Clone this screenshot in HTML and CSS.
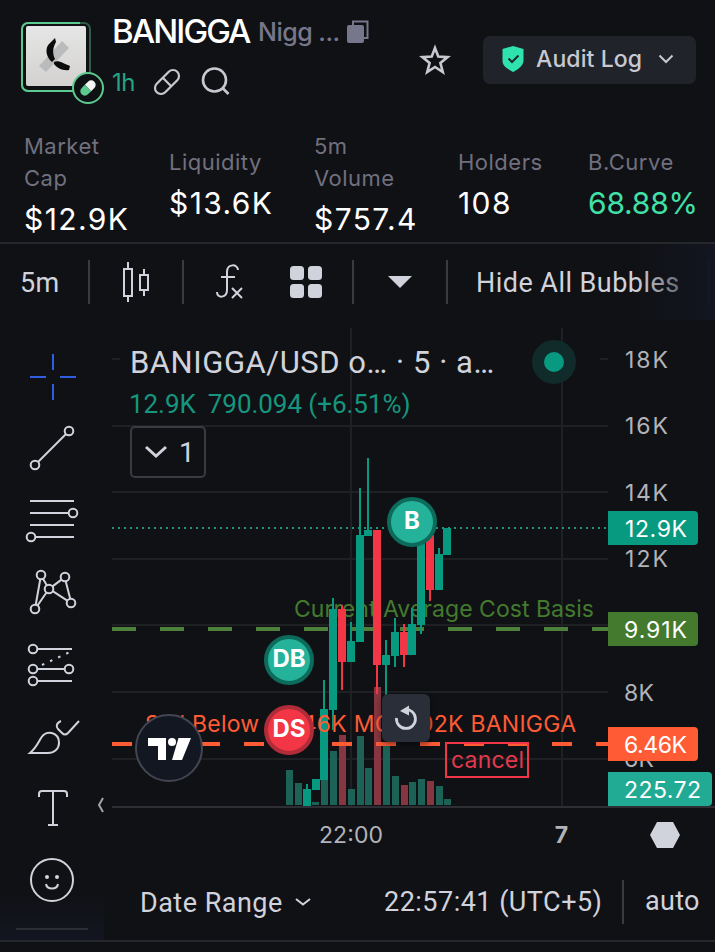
FILE: index.html
```html
<!DOCTYPE html>
<html lang="en">
<head>
  <meta charset="UTF-8" />
  <meta name="viewport" content="width=device-width, initial-scale=1.0" />
  <title>BANIGGA/USD</title>
  <link rel="stylesheet" href="styles.css">
</head>
<body>

  <header class="token">
    <div class="avatar">
      <svg width="72" height="72" viewBox="0 0 72 72">
        <defs>
          <linearGradient id="photo" x1="0" y1="0" x2="0" y2="1">
            <stop offset="0" stop-color="#e6e6e6"/><stop offset="1" stop-color="#d2d1cf"/>
          </linearGradient>
        </defs>
        <rect x="2" y="2" width="68" height="68" rx="6" fill="none" stroke="#2f5c49" stroke-width="2"/>
        <path d="M60 2H8a6 6 0 0 0-6 6v56a6 6 0 0 0 6 6h48" fill="none" stroke="#5cc98f" stroke-width="2"/>
        <rect x="6" y="5" width="60" height="60" rx="2" fill="url(#photo)"/>
        <path d="M42 20l7 7-23 24-7-6z" fill="#b9bbbd"/>
        <path d="M35 17l1 4c-3 5-4 11-1 17l-3 3c-7-6-7-15-2-19z" fill="#0b0b0c"/>
        <path d="M34 41c5-2 8 1 16 4l-1 4c-6 1-12-2-15-6z" fill="#0b0b0c"/>
      </svg>
      <svg class="pump" width="32" height="32" viewBox="0 0 32 32">
        <circle cx="16" cy="16" r="15" fill="#0e1013" stroke="#5cc98f" stroke-width="2"/>
        <g transform="rotate(45 16 16)">
          <path d="M11.500 16V11.500a4.500 4.500 0 0 1 9 0V16z" fill="#f4f6f5"/>
          <path d="M11.500 16v4.500a4.500 4.500 0 0 0 9 0V16z" fill="#5cc98f"/>
        </g>
      </svg>
    </div>
    <div class="token-info">
      <div class="token-name">
        <h1>BANIGGA</h1>
        <span class="subname">Nigg ...</span>
        <svg width="22" height="24" viewBox="0 0 22 24">
          <path d="M6 5V1.500h14.500V18H17" fill="none" stroke="#77778b" stroke-width="2"/>
          <rect x="0" y="5" width="17" height="18" rx="2" fill="#77778b"/>
        </svg>
      </div>
      <div class="token-links">
        <span class="age">1h</span>
        <svg width="28" height="28" viewBox="0 0 28 28" fill="none" stroke="#c8c9d0" stroke-width="2.200">
          <g transform="rotate(45 14 14)"><rect x="8" y="-0.500" width="12" height="29" rx="6"/><path d="M8 14h12"/></g>
        </svg>
        <svg class="search" width="30" height="30" viewBox="0 0 30 30" fill="none" stroke="#c8c9d0" stroke-width="2.600">
          <circle cx="13.500" cy="13" r="11.500"/><path d="M21.500 21l6 6"/>
        </svg>
      </div>
    </div>
    <svg class="star" width="32" height="32" viewBox="0 0 32 32">
      <path d="M16 4l3.300 8.600 9.300.500-7.200 5.900 2.400 9L16 23l-7.800 5 2.400-9-7.200-5.900 9.300-.500z" fill="none" stroke="#c8c9d0" stroke-width="2.600"/>
    </svg>
    <button class="audit">
      <svg width="22" height="26" viewBox="0 0 22 26">
        <path d="M11 0l10.500 3v12c0 5-8 10-10.500 11C5.500 23 .500 20 .500 15V3z" fill="#2fe3ac"/>
        <path d="M6.500 12.500l3.500 3.500 6.500-6.500" fill="none" stroke="#1d2a2d" stroke-width="2"/>
      </svg>
      <span>Audit Log</span>
      <svg width="16" height="10" viewBox="0 0 16 10"><path d="M1.500 1.500L8 8l6.500-6.500" fill="none" stroke="#c8c9d0" stroke-width="2"/></svg>
    </button>
  </header>

  <section class="stats">
    <div class="stat"><span>Market<br>Cap</span><b>$12.9K</b></div>
    <div class="stat"><span>Liquidity</span><b>$13.6K</b></div>
    <div class="stat"><span>5m<br>Volume</span><b>$757.4</b></div>
    <div class="stat"><span>Holders</span><b>108</b></div>
    <div class="stat"><span>B.Curve</span><b class="curve">68.88%</b></div>
  </section>

  <nav class="toolbar">
    <span class="tf">5m</span>
    <div class="tool candles">
      <svg width="30" height="42" viewBox="0 0 30 42" fill="none" stroke="#d1d3dc" stroke-width="2">
        <path d="M3 8h8v27H3zM7 1v7M7 35v6M19 14h8v15h-8zM23 8v6M23 29v6"/>
      </svg>
    </div>
    <div class="tool group">
      <svg width="30" height="38" viewBox="0 0 30 38" fill="none" stroke="#d1d3dc" stroke-width="2">
        <path d="M23 7C23 1 12 0 12 9v18c0 8-10 9-10 2M6 14h14M17 25l10 10M27 25L17 35"/>
      </svg>
      <svg width="32" height="32" viewBox="0 0 32 32" fill="#d1d3dc">
        <rect width="14" height="14" rx="3.500"/><rect x="18" width="14" height="14" rx="3.500"/>
        <rect y="18" width="14" height="14" rx="3.500"/><rect x="18" y="18" width="14" height="14" rx="3.500"/>
      </svg>
    </div>
    <div class="tool more">
      <svg width="24" height="12" viewBox="0 0 24 12"><path d="M0 0h24L12 12z" fill="#d1d3dc"/></svg>
    </div>
    <div class="tool bubbles"><span>Hide All Bubbles</span></div>
  </nav>

  <main class="workspace">
    <aside class="drawing">
      <svg viewBox="0 0 104 72" class="active"><path d="M53 13v16M53 43v16M30 36h16M60 36h16"/></svg>
      <svg viewBox="0 0 104 72"><circle cx="69" cy="18" r="4.300"/><circle cx="35" cy="52" r="4.300"/><path d="M38 49l28-28"/></svg>
      <svg viewBox="0 0 104 72"><circle cx="73" cy="28" r="4.300"/><circle cx="31" cy="52" r="4.300"/><path d="M30 16h44M30 28h39M30 40h44M35 52h39"/></svg>
      <svg viewBox="0 0 104 72">
        <circle cx="41" cy="18" r="4.300"/><circle cx="65" cy="20" r="4.300"/><circle cx="49" cy="32" r="4.300"/><circle cx="71" cy="46" r="4.300"/><circle cx="35" cy="52" r="4.300"/>
        <path d="M35.700 48l4.600-26M43 21.700l3.800 6.600M37.500 48.500l9-13M52.500 29.400l9-6.800M65.700 24.300l4.500 17.500M52.700 34.200l14.600 9.500"/>
      </svg>
      <svg viewBox="0 0 104 72">
        <circle cx="33" cy="20" r="4.300"/><circle cx="33" cy="40" r="4.300"/><circle cx="69" cy="40" r="4.300"/><circle cx="33" cy="52" r="4.300"/>
        <path d="M37 20h35M37 40h28M37 52h35"/><path d="M42 36l28-13" stroke-dasharray="2.500 6.400"/>
      </svg>
      <svg viewBox="0 0 104 72"><path d="M30 52c6-5 8-10 11-15 5-9 18-6 18 5 0 6-5 10-11 10zM61 20c-5 2-5 6-3 8l4 4q3 3 6 0l11-12"/></svg>
      <svg viewBox="0 0 104 72"><path d="M39 24v-3q0-3 3-3h22q3 0 3 3v3M53 18v34M48 52h10"/></svg>
      <svg viewBox="0 0 104 72"><circle cx="52" cy="35" r="21"/><path d="M46 39c1 6 11 6 12 0"/><g fill="#d1d3dc" stroke="none"><circle cx="47" cy="32" r="2"/><circle cx="57" cy="32" r="2"/></g></svg>
      <svg class="collapse" viewBox="0 0 8 16"><path d="M6 1L2 8l4 7"/></svg>
      <hr>
    </aside>

    <section class="chart">
      <div class="plot">
        <svg id="plot" width="611" height="546" viewBox="104 320 611 546">
          <g class="grid">
            <path d="M112 359h8M600 359h8M112 426h496M112 492h496M112 559h496M112 625h496M112 692h496M112 759h496"/>
            <path d="M351 328v478M562 328v478"/>
          </g>
          <path class="axis" d="M112 807h603"/>
          <text class="cost" x="294" y="617" textLength="300">Current Average Cost Basis</text>
          <path class="cost-line" d="M112 629h496"/>
          <g id="volume"></g>
          <g id="candles"></g>
          <path class="price-line" d="M112 528h496"/>
          <path class="sell-line" d="M112 744h496"/>
          <text class="sell" x="145" y="732" textLength="431">Sell Below $6.46K MC 2.02K BANIGGA</text>
          <g class="prices">
            <text x="625" y="368" textLength="43">18K</text>
            <text x="625" y="434" textLength="43">16K</text>
            <text x="625" y="501" textLength="43">14K</text>
            <text x="625" y="567" textLength="43">12K</text>
            <text x="624" y="701" textLength="30">8K</text>
            <text x="624" y="767" textLength="30">6K</text>
          </g>
          <g class="tags">
            <path d="M608 511h86q4 0 4 4v26q0 4-4 4h-86z" fill="#089981"/>
            <path d="M608 612h86q4 0 4 4v26q0 4-4 4h-86z" fill="#437a2d"/>
            <path d="M608 727h86q4 0 4 4v26q0 4-4 4h-86z" fill="#ff5b35"/>
            <path d="M608 772h100q4 0 4 4v26q0 4-4 4H608z" fill="#22ab94"/>
            <text x="625" y="537" textLength="62">12.9K</text>
            <text x="624" y="638" textLength="63">9.91K</text>
            <text x="624" y="753" textLength="63">6.46K</text>
            <text x="624" y="798" textLength="77">225.72</text>
          </g>
          <g class="times">
            <text x="351" y="843" textLength="64">22:00</text>
            <text x="561.500" y="843" class="day">7</text>
          </g>
          <path d="M657 822h16l7 13-7 13h-16l-7-13z" fill="#d1d3dc"/>
          <g class="cancel">
            <rect x="446" y="743" width="82" height="34"/>
            <text x="451" y="768" textLength="73">cancel</text>
          </g>
          <g class="bubble">
            <circle cx="412" cy="522" r="23"/><text x="412" y="529">B</text>
            <circle cx="289" cy="660" r="23"/><text x="289" y="667">DB</text>
            <circle cx="289" cy="730" r="23" class="short"/><text x="289" y="737">DS</text>
          </g>
          <g>
            <circle cx="169" cy="748" r="33" fill="#131722" stroke="#434651" stroke-width="2"/>
            <path d="M148 738h18v22h-8v-14h-10zM178.500 738H191l-9 22h-10z" fill="#fff"/>
            <circle cx="172" cy="742" r="4" fill="#fff"/>
          </g>
          <g>
            <rect class="reset" x="382" y="694" width="48" height="48" rx="6"/>
            <path d="M405 709.500A9.500 9.500 0 1 1 396.500 718" fill="none" stroke="#d1d3dc" stroke-width="2.800"/>
            <path d="M400 711l9-5.500v10z" fill="#d1d3dc"/>
          </g>
        </svg>
        <div class="legend">
          <div class="symbol">BANIGGA/USD o… · 5 · a…</div>
          <div class="change"><span>12.9K</span><span>790.094 (+6.51%)</span></div>
          <div class="studies">
            <svg width="24" height="14" viewBox="0 0 24 14"><path d="M2 2l10 9L22 2" fill="none" stroke="#d1d3dc" stroke-width="3"/></svg>
            <span>1</span>
          </div>
        </div>
        <div class="status"></div>
      </div>
      <footer class="range">
        <span class="date">Date Range</span>
        <svg width="18" height="10" viewBox="0 0 18 10"><path d="M2 2l7 5.500L16 2" fill="none" stroke="#d1d3dc" stroke-width="2"/></svg>
        <span class="clock">22:57:41 (UTC+5)</span>
        <span class="auto">auto</span>
      </footer>
    </section>
  </main>

  <script src="chart.js"></script>
</body>
</html>
```
FILE: styles.css
```css
* {
  box-sizing: border-box;
}
body {
  margin: 0;
  width: 715px;
  height: 952px;
  overflow: hidden;
  background: #101115;
  color: #d1d3dc;
  font-family: Roboto, sans-serif;
}
svg {
  display: block;
  flex: none;
}

/* token header */
.token {
  display: flex;
  height: 128px;
  padding-left: 20px;
  font-family: Inter, sans-serif;
}
.avatar {
  position: relative;
  width: 92px;
  padding-top: 21px;
}
.pump {
  position: absolute;
  left: 52px;
  top: 72px;
}
.token-info {
  width: 308px;
  padding-top: 10px;
}
.token-name {
  display: flex;
  align-items: center;
  height: 44px;
}
h1 {
  margin: 0;
  width: 146px;
  padding-bottom: 2px;
  font-size: 33px;
  font-weight: 500;
  letter-spacing: -1.9px;
  color: #fff;
}
.subname {
  width: 89px;
  font-size: 25px;
  font-weight: 500;
  letter-spacing: -0.5px;
  color: #77778b;
  white-space: nowrap;
}
.token-links {
  display: flex;
  align-items: center;
  height: 56px;
}
.age {
  width: 41px;
  font-size: 24px;
  letter-spacing: -0.5px;
  color: #23a583;
}
.search {
  margin-left: 20px;
}
.star {
  margin-top: 44px;
  margin-left: -1px;
  margin-right: 32px;
}
.audit {
  display: flex;
  align-items: center;
  width: 213px;
  height: 48px;
  margin-top: 36px;
  padding: 0 0 2px 19px;
  border: 0;
  border-radius: 7px;
  background: #20232a;
  color: #c8c9d0;
  font: 500 23px Inter, sans-serif;
  letter-spacing: 0.1px;
}
.audit span {
  width: 122px;
  margin-left: 12px;
  text-align: left;
  white-space: nowrap;
}

/* stats */
.stats {
  display: grid;
  grid-template-columns: 145px 145px 144px 130px auto;
  align-items: center;
  height: 116px;
  padding: 0 0 4px 24px;
  border-bottom: 2px solid #26272c;
  font-family: Inter, sans-serif;
}
.stat span {
  display: block;
  font-size: 22px;
  line-height: 32px;
  letter-spacing: 0.5px;
  color: #70707f;
}
.stat b {
  display: block;
  margin-bottom: -4px;
  padding-top: 4px;
  font-size: 30px;
  font-weight: 400;
  line-height: 43px;
  letter-spacing: 1.4px;
  color: #fff;
}
.stat .curve {
  letter-spacing: -0.2px;
  color: #41e0a8;
}

/* chart toolbar */
.toolbar {
  position: relative;
  display: flex;
  align-items: center;
  height: 76px;
  padding-left: 20px;
  font-size: 27px;
}
.toolbar::after {
  content: "";
  position: absolute;
  top: 0;
  right: 0;
  width: 80px;
  height: 76px;
  background: linear-gradient(90deg, rgba(19, 22, 33, 0), #131621);
}
.tf {
  width: 68px;
  padding-top: 2px;
  letter-spacing: 0.3px;
}
.tool {
  display: flex;
  align-items: center;
  height: 44px;
  border-left: 2px solid #3a3b41;
}
.candles {
  width: 94px;
  padding-left: 31px;
}
.group {
  width: 170px;
  padding-left: 31px;
  gap: 45px;
}
.more {
  width: 94px;
  padding-left: 34px;
}
.bubbles {
  width: 264px;
  padding-left: 28px;
  border-right: 2px solid #3a3b41;
  letter-spacing: 0.45px;
  white-space: nowrap;
}
.bubbles span {
  padding-top: 2px;
}

.workspace {
  display: flex;
  height: 622px;
  border-bottom: 2px solid #26272c;
}

/* drawing tools */
.drawing {
  position: relative;
  width: 104px;
  padding-top: 21px;
  background: linear-gradient(180deg, #101115 93%, #131621 100%);
}
.drawing svg {
  width: 104px;
  height: 72px;
  fill: none;
  stroke: #d1d3dc;
  stroke-width: 2;
}
.drawing .active {
  stroke: #2f5fe0;
}
.drawing .collapse {
  position: absolute;
  left: 97px;
  top: 477px;
  width: 8px;
  height: 16px;
  stroke: #a3a4aa;
}
.drawing hr {
  width: 72px;
  height: 2px;
  margin: 11px 0 0 16px;
  border: 0;
  background: #2c2e36;
}

/* plot */
.plot {
  position: relative;
  width: 611px;
  height: 546px;
}
.plot text {
  font-family: Inter, sans-serif;
  font-size: 23px;
}
.grid path,
.axis {
  fill: none;
  stroke: #1f2024;
  stroke-width: 2;
}
.plot .axis {
  stroke: #2e2f34;
}
.cost {
  fill: #437a2d;
}
.cost-line {
  stroke: #4c803b;
  stroke-width: 4;
  stroke-dasharray: 24 24;
}
.price-line {
  stroke: #23937f;
  stroke-width: 2;
  stroke-dasharray: 2 4;
}
.sell {
  fill: #ff5b35;
}
.sell-line {
  stroke: #ff5b35;
  stroke-width: 4;
  stroke-dasharray: 20 24;
}
.up {
  fill: #089981;
}
.down {
  fill: #f23645;
}
#volume .up {
  fill: #1c6256;
}
#volume .down {
  fill: #853640;
}
.prices {
  fill: #b2b3b9;
}
.tags text {
  fill: #fff;
}
.times {
  fill: #b2b3b9;
  text-anchor: middle;
}
.plot .day {
  font-weight: 700;
}
.cancel rect {
  fill: none;
  stroke: #f23645;
  stroke-width: 2;
}
.cancel text {
  fill: #e2394d;
}
.bubble circle {
  fill: #24b39a;
  stroke: #0c6b5b;
  stroke-width: 4;
}
.bubble .short {
  fill: #f23645;
  stroke: #b02c38;
}
.bubble text {
  fill: #fff;
  font-size: 24px;
  font-weight: 700;
  text-anchor: middle;
}
.reset {
  fill: #2a2e39;
  filter: drop-shadow(0 2px 3px rgba(0, 0, 0, 0.5));
}

.legend {
  position: absolute;
  left: 26px;
  top: 22px;
}
.symbol {
  font-size: 31px;
  line-height: 42px;
  letter-spacing: 0.54px;
  white-space: nowrap;
}
.change {
  display: flex;
  gap: 12px;
  margin-left: -1px;
  font-size: 26px;
  line-height: 40px;
  letter-spacing: -0.05px;
  color: #16967e;
  white-space: nowrap;
}
.studies {
  display: flex;
  align-items: center;
  gap: 11px;
  width: 76px;
  height: 52px;
  margin-top: 2px;
  padding-left: 12px;
  border: 2px solid #3a3b41;
  border-radius: 5px;
  font-size: 28px;
}
.status {
  position: absolute;
  left: 428px;
  top: 20px;
  width: 44px;
  height: 44px;
  border: 12px solid #112a2a;
  border-radius: 50%;
  background: #089981;
}

/* bottom bar */
.range {
  display: flex;
  align-items: center;
  height: 74px;
  padding: 0 0 2px 36px;
  font-size: 27px;
  letter-spacing: 0.48px;
  white-space: nowrap;
}
.date {
  width: 154px;
  padding-top: 2px;
}
.clock {
  width: 238px;
  margin-left: 72px;
}
.auto {
  height: 44px;
  padding-left: 21px;
  border-left: 2px solid #3a3b41;
  letter-spacing: 0.3px;
  line-height: 42px;
}
```
FILE: chart.js
```javascript
// [left, body top, body bottom, wick top, wick bottom, direction]
const candles = [
  [303, 789, 806, 784, 806, 'up'],
  [312, 779, 790, 779, 790, 'up'],
  [320, 709, 780, 680, 780, 'up'],
  [329, 609, 710, 598, 730, 'up'],
  [338, 609, 662, 605, 690, 'down'],
  [347, 641, 662, 622, 662, 'up'],
  [356, 535, 642, 488, 642, 'up'],
  [364, 530, 536, 458, 536, 'up'],
  [373, 530, 665, 530, 694, 'down'],
  [382, 655, 665, 640, 695, 'up'],
  [391, 632, 656, 618, 667, 'up'],
  [400, 632, 655, 624, 667, 'down'],
  [408, 624, 655, 608, 655, 'up'],
  [417, 530, 625, 530, 634, 'up'],
  [426, 535, 590, 535, 601, 'down'],
  [435, 554, 590, 548, 590, 'up'],
  [443, 528, 555, 528, 555, 'up']
];

// [left, top, direction]
const volume = [
  [286, 770, 'up'], [295, 783, 'up'], [312, 802, 'up'], [321, 780, 'up'],
  [330, 751, 'up'], [339, 735, 'down'], [348, 789, 'up'], [357, 736, 'up'],
  [365, 768, 'up'], [374, 687, 'down'], [383, 746, 'up'], [392, 776, 'up'],
  [401, 785, 'down'], [409, 782, 'up'], [418, 779, 'up'], [427, 781, 'down'],
  [436, 786, 'up'], [444, 799, 'up']
];

function bar(parent, x, y, width, height, dir) {
  const rect = document.createElementNS('http://www.w3.org/2000/svg', 'rect');
  rect.setAttribute('x', x);
  rect.setAttribute('y', y);
  rect.setAttribute('width', width);
  rect.setAttribute('height', height);
  rect.setAttribute('class', dir);
  parent.appendChild(rect);
}

const volumeGroup = document.getElementById('volume');
volume.forEach(([x, top, dir]) => bar(volumeGroup, x, top, 7, 805 - top, dir));

const candleGroup = document.getElementById('candles');
candles.forEach(([x, top, bottom, high, low, dir]) => {
  bar(candleGroup, x + 3, high, 2, low - high, dir);
  bar(candleGroup, x, top, 8, bottom - top, dir);
});
```
